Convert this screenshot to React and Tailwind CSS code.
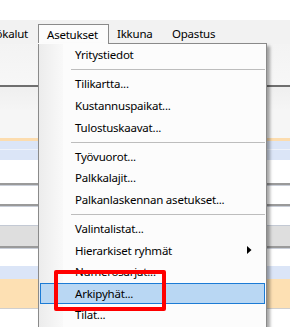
const menuGroups = [
  ["Yritystiedot"],
  ["Tilikartta...", "Kustannuspaikat...", "Tulostuskaavat..."],
  ["Työvuorot...", "Palkkalajit...", "Palkanlaskennan asetukset..."],
  ["Valintalistat...", "Hierarkiset ryhmät", "Numerosarjat...", "Arkipyhät...", "Tilat..."],
];

function MenuItem({ label }) {
  const active = label === "Arkipyhät...";
  const submenu = label === "Hierarkiset ryhmät";
  return (
    <div className="h-[21.6px] px-[1px]">
      <div
        className={`h-full flex items-center pl-[34px] pr-[10px] border ${
          active ? "bg-[#b9d7f3] border-[#1c7bd5]" : "border-transparent"
        }`}
      >
        <span className="flex-1 whitespace-nowrap">{label}</span>
        {submenu && (
          <svg width="5" height="8" viewBox="0 0 5 8" className="mr-[2px]">
            <path d="M0 0 L4.5 4 L0 8 Z" fill="#000" />
          </svg>
        )}
      </div>
    </div>
  );
}

function Separator() {
  return (
    <div className="h-[7.6px] pl-[32px] pr-[1px] pt-[3.6px]">
      <div className="h-px bg-[#bdbdbd]" />
    </div>
  );
}

export default function App() {
  return (
    <div
      className="relative w-[290px] h-[327px] overflow-hidden bg-white text-[11.5px] tracking-[-0.22px] text-black"
      style={{ fontFamily: '"Noto Sans", "Open Sans", sans-serif' }}
    >
      {/* top strip */}
      <div className="h-[20px] bg-white" />

      {/* menu bar */}
      <div className="h-[24px] bg-[#f2f2f2] flex items-end">
        <div className="w-[38px] h-[20px] overflow-hidden flex justify-end items-center pr-[10px]">
          <span className="whitespace-nowrap">Työkalut</span>
        </div>
        <div className="w-[71px] h-[20px] border border-b-0 border-[#8a8a8a] bg-[#fcfcfc] flex items-center pl-[8px]">
          Asetukset
        </div>
        <div className="h-[20px] flex items-center pl-[8px] w-[63px]">Ikkuna</div>
        <div className="h-[20px] flex items-center">Opastus</div>
      </div>

      {/* toolbar */}
      <div className="h-[41px] bg-[linear-gradient(to_bottom,#f3f3f3,#f7f7f7)]" />
      <div className="h-[2px] bg-[#6f6f6f]" />

      {/* grid rows behind the menu */}
      <div className="h-[23px] bg-[linear-gradient(to_bottom,#efefef,#f5f5f5)]" />
      <div className="h-[28px] bg-[#f6f6f6]" />
      <div className="h-[3px] bg-[#fcdcae]" />
      <div className="h-[8px] bg-[#dbe5f7]" />
      <div className="h-px bg-[#eef2fa]" />
      <div className="h-[10px] bg-[#dbe5f7]" />
      <div className="h-[23px] bg-white" />
      <div className="h-[2px] bg-[#9a9a9a] border-b border-[#c9ced8] box-content" />
      <div className="h-[18px] bg-white" />
      <div className="h-[2px] bg-[#9a9a9a] border-b border-[#c9ced8] box-content" />
      <div className="h-[18px] bg-white" />
      <div className="h-px bg-[#c3c9d4]" />
      <div className="h-[20px] bg-[#dedede]" />
      <div className="h-[2px] bg-[#9a9a9a] border-b border-[#c9ced8] box-content" />
      <div className="h-[17px] bg-white" />
      <div className="h-[13px] bg-[#dbe5f7]" />
      <div className="h-[29px] bg-[#fde0b3]" />
      <div className="h-px bg-[#cfcfcf]" />
      <div className="h-[14px] bg-white" />

      {/* open dropdown */}
      <div className="absolute left-[38px] top-[43px] w-[229px] h-[300px] border border-[#8a8a8a] bg-[linear-gradient(to_right,#ececec_0px,#f9f9f9_24px,#fcfcfc_24px)] shadow-[3px_3px_3px_rgba(0,0,0,0.35)]">
        <div className="absolute left-[-1px] top-[-1px] w-[70px] h-px bg-[#fcfcfc]" />
        {menuGroups.map((group, gi) => (
          <div key={gi}>
            {gi > 0 && <Separator />}
            {group.map((label) => (
              <MenuItem key={label} label={label} />
            ))}
          </div>
        ))}
      </div>

      {/* red annotation */}
      <div className="absolute left-[54px] top-[270px] w-[112px] h-[41px] border-[4px] border-[#ff0000] rounded-[2px]" />
    </div>
  );
}
